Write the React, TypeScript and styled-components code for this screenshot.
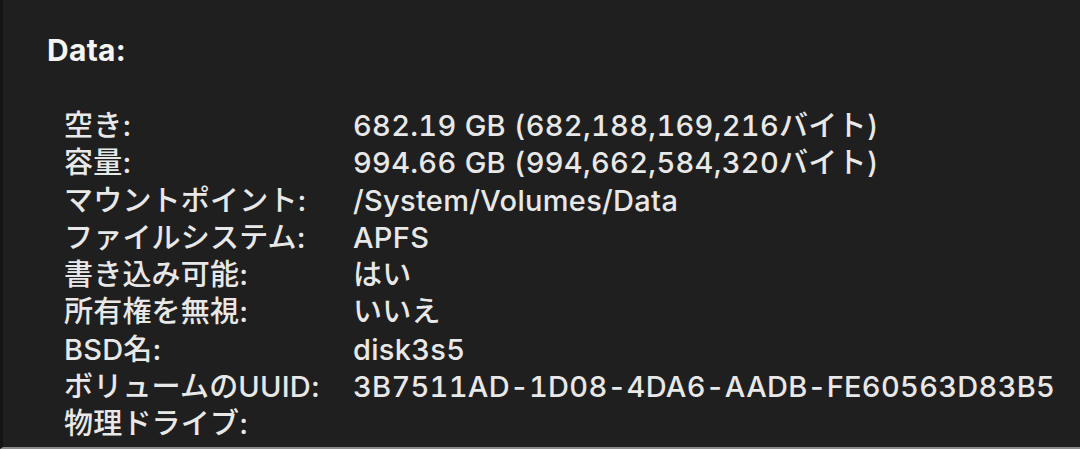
import React from 'react';
import styled, { createGlobalStyle } from 'styled-components';

const GlobalStyle = createGlobalStyle`
  html, body {
    margin: 0;
    padding: 0;
    background: #1f1f1f;
  }
`;

const Panel = styled.div`
  box-sizing: border-box;
  width: 1080px;
  height: 449px;
  overflow: hidden;
  background-color: #1f1f1f;
  border-left: 3px solid #141414;
  border-bottom: 2px solid #8c8c8c;
  padding: 35px 0 0 44px;
  font-family: Inter, 'Noto Sans CJK JP', sans-serif;
  color: #e8e8e8;
`;

const Title = styled.div`
  font-size: 30px;
  line-height: 30px;
  font-weight: 700;
  letter-spacing: 0.3px;
  color: #f4f4f4;
  margin-bottom: 42px;
`;

const InfoList = styled.div`
  display: grid;
  grid-template-columns: 289px 1fr;
  padding-left: 17px;
  font-size: 29px;
  font-weight: 500;
  line-height: 37.3px;
  white-space: nowrap;
`;

const Label = styled.div`
  letter-spacing: 0.2px;
`;

const Value = styled.div`
  font-variant-numeric: tabular-nums;
  letter-spacing: 0.3px;
`;

const rows: [string, string][] = [
  ['空き:', '682.19 GB (682,188,169,216バイト)'],
  ['容量:', '994.66 GB (994,662,584,320バイト)'],
  ['マウントポイント:', '/System/Volumes/Data'],
  ['ファイルシステム:', 'APFS'],
  ['書き込み可能:', 'はい'],
  ['所有権を無視:', 'いいえ'],
  ['BSD名:', 'disk3s5'],
  ['ボリュームのUUID:', '3B7511AD-1D08-4DA6-AADB-FE60563D83B5'],
  ['物理ドライブ:', ''],
];

export default function App() {
  return (
    <>
      <GlobalStyle />
      <Panel>
        <Title>Data:</Title>
        <InfoList>
          {rows.map(([k, v]) => (
            <React.Fragment key={k}>
              <Label>{k}</Label>
              <Value>{v}</Value>
            </React.Fragment>
          ))}
        </InfoList>
      </Panel>
    </>
  );
}
